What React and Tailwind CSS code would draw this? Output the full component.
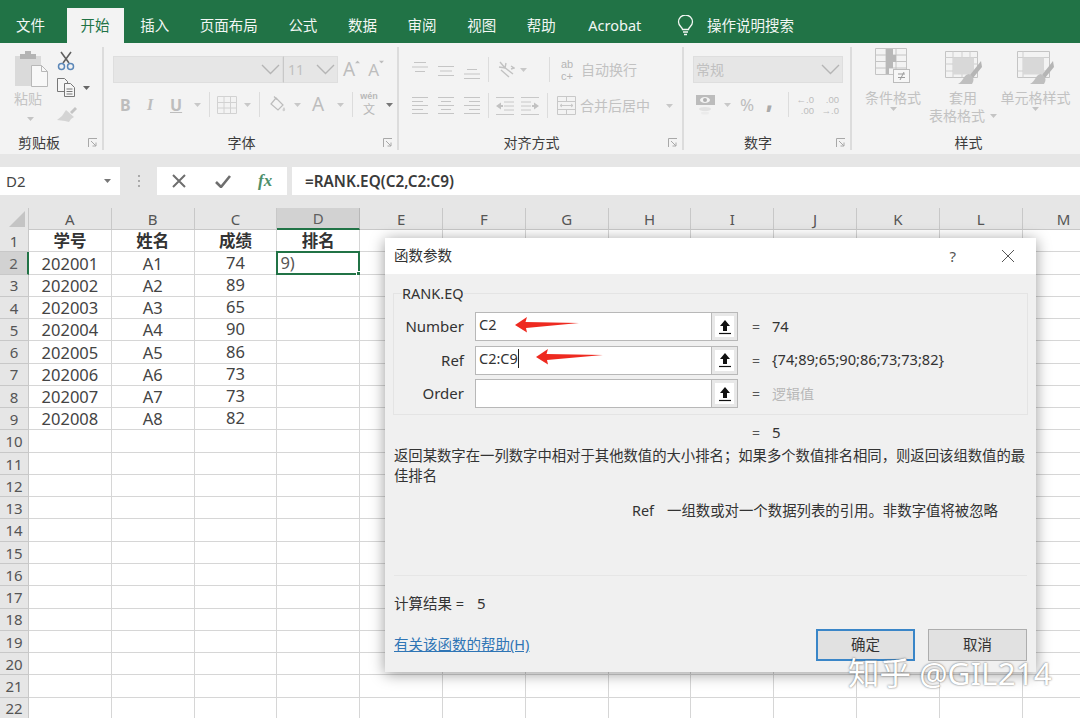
import React from "react";

const tabs = ["审阅", "视图", "帮助", "Acrobat"];
const columns = ["A", "B", "C", "D", "E", "F", "G", "H", "I", "J", "K", "L", "M"];
const students = [
  ["202001", "A1", "74"],
  ["202002", "A2", "89"],
  ["202003", "A3", "65"],
  ["202004", "A4", "90"],
  ["202005", "A5", "86"],
  ["202006", "A6", "73"],
  ["202007", "A7", "73"],
  ["202008", "A8", "82"],
];
const rowNumbers = Array.from({ length: 22 }, (_, i) => i + 1);

const Caret = ({ className = "" }) => (
  <svg width="7" height="4" viewBox="0 0 7 4" className={className}>
    <path d="M0 0h7L3.5 4z" fill="currentColor" />
  </svg>
);

const Chevron = () => (
  <svg width="19" height="11" viewBox="0 0 19 11" fill="none" stroke="#b5b5b5" strokeWidth="1.4">
    <path d="M1 1l8.5 8.5L18 1" />
  </svg>
);

const Launcher = () => (
  <svg width="10" height="10" viewBox="0 0 10 10" fill="none" stroke="#a8a8a8" strokeWidth="1">
    <path d="M.5 9V.5H9M3 3l5 5M8 4.5V8H4.5" />
  </svg>
);

const Sep = ({ className = "" }) => <div className={`w-px h-[25px] bg-[#dcdcdc] ${className}`} />;

const PasteIcon = () => (
  <svg width="34" height="36" viewBox="0 0 34 36">
    <rect x="0" y="5" width="26" height="30" fill="#dadada" />
    <rect x="5" y="3" width="16" height="5" fill="#b4b4b4" />
    <rect x="10" y="0" width="6" height="4" fill="#b4b4b4" />
    <path d="M16.5 14.5h10l6 6v15h-16z" fill="#f8f8f8" stroke="#b8b8b8" />
    <path d="M26.5 14.5v6h6" fill="none" stroke="#b8b8b8" />
  </svg>
);

const ScissorsIcon = () => (
  <svg width="18" height="20" viewBox="0 0 18 20" fill="none">
    <path d="M4 1l8 11M14 1L6 12" stroke="#5f5f5f" strokeWidth="1.6" />
    <circle cx="4.5" cy="15.5" r="3" stroke="#5b87b8" strokeWidth="1.5" />
    <circle cx="13.5" cy="15.5" r="3" stroke="#5b87b8" strokeWidth="1.5" />
  </svg>
);

const CopyIcon = () => (
  <svg width="18" height="19" viewBox="0 0 18 19" fill="#f6f6f6" stroke="#777">
    <path d="M.5.5h7l3 3v10H.5z" />
    <path d="M7.5 5.5h6l4 4v9h-10z" />
    <path d="M9.5 11h6M9.5 13.5h6M9.5 16h6" />
  </svg>
);

const BrushIcon = () => (
  <svg width="20" height="16" viewBox="0 0 20 16">
    <path d="M13 5l5-5 2 2-5 5z" fill="#c4c4c4" />
    <path d="M9 3l8 7-3 2-2 3-4-1-8-1 5-4z" fill="#d4d4d4" />
  </svg>
);

const GridIcon = () => (
  <svg width="20" height="18" viewBox="0 0 20 18" fill="none" stroke="#d2d2d2">
    <path d="M.5.5h19v17H.5zM.5 6.500h19M.5 12h19M7 .5v17M13.500.5v17" />
  </svg>
);

const FillIcon = () => (
  <svg width="17" height="17" viewBox="0 0 17 17" fill="none" stroke="#bcbcbc" strokeWidth="1.2">
    <path d="M7 2l7 7-5 5-7-6z" fill="#f3f3f3" />
    <path d="M5 .5l3 3" />
    <path d="M15 11c1 1.600 1.500 2.400 1 3.400-.5 1-2 1-2.400 0-.3-1 .4-2 1.400-3.400z" fill="#cfcfcf" stroke="none" />
  </svg>
);

const lineSet = {
  top: [[2, 14], [0, 16], [3, 13]],
  middle: [[0, 16], [2, 14], [0, 16]],
  bottom: [[3, 13], [0, 16], [0, 16]],
};

const VAlign = ({ kind, top }) => (
  <svg width="17" height="18" viewBox="0 0 17 18" stroke="#c5c5c5">
    {lineSet[kind].map(([a, b], i) => (
      <path key={i} d={`M${a} ${top + i * 4.5 + 0.5}H${b}`} />
    ))}
  </svg>
);

const HAlign = ({ kind }) => {
  const spans = {
    left: [[0, 16], [0, 11], [0, 16], [0, 11], [0, 16]],
    center: [[0, 16], [3, 13], [0, 16], [3, 13], [0, 16]],
    right: [[0, 16], [5, 16], [0, 16], [5, 16], [0, 16]],
  }[kind];
  return (
    <svg width="17" height="18" viewBox="0 0 17 18" stroke="#c5c5c5">
      {spans.map(([a, b], i) => (
        <path key={i} d={`M${a} ${i * 4 + 0.5}H${b}`} />
      ))}
    </svg>
  );
};

const OrientIcon = () => (
  <svg width="17" height="17" viewBox="0 0 17 17" fill="none" stroke="#c2c2c2" strokeWidth="1.4">
    <path d="M2 1l5 6M1 6l6 1 1-5" />
    <path d="M3 9l8 7M6 6l9 7" />
    <path d="M13 5l3 2-3 1" />
  </svg>
);

const IndentIcon = ({ flip }) => (
  <svg width="18" height="18" viewBox="0 0 18 18" className={flip ? "-scale-x-100" : ""}>
    <path d="M0 .5h18M8 5h10M8 9h10M8 13h10M0 17.500h18" stroke="#c8c8c8" fill="none" />
    <path d="M0 9l5-3.500v2.500h2v2H5v2.500z" fill="#c2c2c2" />
  </svg>
);

const MergeIcon = () => (
  <svg width="19" height="19" viewBox="0 0 19 19" fill="none" stroke="#c8c8c8">
    <path d="M.5.5h18v18H.5zM.5 5.500h18M.5 13.500h18M9.500.5v5M9.500 13.500v5" />
    <path d="M3 9.500h13M3 9.500l2-1.500M3 9.500l2 1.500M16 9.500L14 8M16 9.500L14 11" />
  </svg>
);

const CurrencyIcon = () => (
  <svg width="19" height="20" viewBox="0 0 19 20">
    <rect x="0" y="0" width="19" height="10" fill="#bcbcbc" />
    <ellipse cx="9" cy="5" rx="5" ry="3" fill="#f3f3f3" />
    <circle cx="9" cy="5" r="2" fill="#b0b0b0" />
    <ellipse cx="9" cy="14" rx="6" ry="2" fill="#e2e2e2" />
    <ellipse cx="9" cy="18" rx="4" ry="1.500" fill="#ebebeb" />
  </svg>
);

const CondIcon = () => (
  <svg width="36" height="37" viewBox="0 0 36 37" fill="none">
    <path d="M.5.5h31v26H.5zM.5 7h31M.5 13.500h31M.5 20h31M11 .5v26M21 .5v26" stroke="#c4c4c4" />
    <path d="M11 1h7v6h3v7h-3v6h-4v6h-3z" fill="#b8b8b8" />
    <rect x="18.500" y="21.500" width="16" height="13" fill="#f6f6f6" stroke="#bcbcbc" />
    <path d="M23 26h7M23 29.500h7M25 32l4-8" stroke="#9a9a9a" />
  </svg>
);

const StyleIcon = ({ table }) => (
  <svg width="37" height="34" viewBox="0 0 37 34" fill="none">
    <path d="M.5.5h32v26H.5z" stroke="#c4c4c4" />
    {table ? <path d="M.5 6.500h32M.5 13h32M.5 20h32M8 .5v26M17 .5v26M25 .5v26" stroke="#cfcfcf" /> : <path d="M.5 6.500h32M.5 20h32M6 .5v26" stroke="#cfcfcf" />}
    <rect x={table ? 8 : 6} y="6.500" width="21" height="17" fill="#d8d8d8" />
    <path d="M36 10L25 24l3 3 9-11z" fill="#b5b5b5" />
    <path d="M24 23c-6 1-5 7-11 10h14c2-3 2-6 0-8z" fill="#bfbfbf" />
  </svg>
);

const StyleGroupItem = ({ icon, label, second, width }) => (
  <div className={`flex flex-col items-center ${width}`}>
    <div className="h-[38px] flex items-end">{icon}</div>
    <div className="text-[14px] leading-[18px] mt-[4px] text-[#c2c2c2] whitespace-nowrap">{label}</div>
    <div className="text-[14px] leading-[18px] text-[#c2c2c2] whitespace-nowrap flex items-center justify-center">
      {second && <span>{second}</span>}
      <Caret className={`text-[#c4c4c4] ${second ? "ml-[5px]" : ""}`} />
    </div>
  </div>
);

const Footer = ({ label }) => (
  <div className="h-[24px] -mb-[3px] pt-[3px] flex items-center pr-[4px]">
    <div className="flex-1 text-center text-[14px] text-[#3c3c3c] pr-[4px]">{label}</div>
    <Launcher />
  </div>
);

const Ribbon = () => (
  <div className="h-[111px] bg-[#f3f3f3] flex">
    <div className="w-[104px] flex flex-col border-r-2 border-[#dcdcdc] my-[4px]">
      <div className="flex-1 flex pt-[4px]">
        <div className="w-[57px] pl-[15px] flex flex-col">
          <PasteIcon />
          <div className="text-[14px] text-[#c4c4c4] leading-[18px] mt-[3px] -ml-[1px]">粘贴</div>
          <Caret className="text-[#c4c4c4] ml-[12px] mt-[9px]" />
        </div>
        <div className="flex flex-col">
          <ScissorsIcon />
          <div className="flex items-center gap-[8px] mt-[7px]">
            <CopyIcon />
            <Caret className="text-[#666]" />
          </div>
          <div className="mt-[10px]"><BrushIcon /></div>
        </div>
      </div>
      <div className="h-[24px] -mb-[3px] pt-[3px] flex items-center pl-[18px] pr-[4px] text-[14px] text-[#3c3c3c] justify-between">
        <span>剪贴板</span>
        <Launcher />
      </div>
    </div>

    <div className="w-[295px] flex flex-col my-[4px] border-r-2 border-[#dcdcdc]">
      <div className="flex-1 pl-[9px] pt-[9px]">
        <div className="flex items-center">
          <div className="w-[170px] h-[27px] bg-[#e6e6e6] border border-[#dedede] flex items-center justify-end pr-[2px]"><Chevron /></div>
          <div className="w-[55px] h-[27px] bg-[#e6e6e6] border border-[#dedede] border-l-[#c8c8c8] flex items-center justify-between pl-[4px] pr-[2px] text-[14px] text-[#c0c0c0]">
            <span>11</span>
            <Chevron />
          </div>
          <div className="flex items-start ml-[5px] text-[#bdbdbd] leading-none">
            <span className="text-[19px]">A</span>
            <Caret className="rotate-180 -ml-[1px] scale-75" />
            <span className="text-[17px] ml-[7px] mt-[1px]">A</span>
            <Caret className="-ml-[1px] scale-75" />
          </div>
        </div>
        <div className="flex items-center h-[25px] mt-[9px] pl-[7px] text-[#bdbdbd]">
          <span className="text-[16px] font-bold w-[27px]">B</span>
          <span className="text-[16px] font-bold italic w-[23px] [font-family:'Liberation_Serif',serif]">I</span>
          <span className="text-[16px] font-bold underline w-[24px]">U</span>
          <Caret className="text-[#c8c8c8]" />
          <Sep className="ml-[8px] mr-[7px]" />
          <GridIcon />
          <Caret className="text-[#c8c8c8] ml-[7px]" />
          <Sep className="ml-[8px] mr-[9px]" />
          <FillIcon />
          <Caret className="text-[#c8c8c8] ml-[8px]" />
          <span className="text-[19px] ml-[11px] w-[15px]">A</span>
          <Caret className="text-[#c8c8c8] ml-[10px]" />
          <Sep className="ml-[8px] mr-[7px]" />
          <div className="w-[18px] flex flex-col items-center text-[#b8b8b8]">
            <span className="text-[9px] leading-[10px] font-semibold [font-family:'Liberation_Sans',sans-serif]">wén</span>
            <span className="text-[12px] leading-[17px]">文</span>
          </div>
          <Caret className="text-[#777] ml-[8px]" />
        </div>
      </div>
      <Footer label="字体" />
    </div>

    <div className="w-[285px] flex flex-col my-[4px] border-r-2 border-[#dcdcdc]">
      <div className="flex-1 pl-[13px] pt-[13px]">
        <div className="flex items-center h-[19px]">
          <VAlign kind="top" top={1} />
          <div className="ml-[9px]"><VAlign kind="middle" top={5} /></div>
          <div className="ml-[9px]"><VAlign kind="bottom" top={8} /></div>
          <Sep className="ml-[7px] mr-[9px]" />
          <OrientIcon />
          <Caret className="text-[#c8c8c8] ml-[5px]" />
          <Sep className="ml-[22px] mr-[11px]" />
          <div className="w-[16px] text-[11px] leading-[12px] text-[#b5b5b5] [font-family:'Liberation_Sans',sans-serif]">ab<br />c+</div>
          <span className="ml-[4px] text-[14px] text-[#c2c2c2]">自动换行</span>
        </div>
        <div className="flex items-center h-[25px] mt-[14px]">
          <HAlign kind="left" />
          <div className="ml-[9px]"><HAlign kind="center" /></div>
          <div className="ml-[9px]"><HAlign kind="right" /></div>
          <Sep className="ml-[7px] mr-[7px]" />
          <IndentIcon />
          <div className="ml-[7px]"><IndentIcon flip /></div>
          <Sep className="ml-[8px] mr-[9px]" />
          <MergeIcon />
          <span className="ml-[4px] text-[14px] text-[#c2c2c2] w-[86px]">合并后居中</span>
          <Caret className="text-[#c8c8c8]" />
        </div>
      </div>
      <Footer label="对齐方式" />
    </div>

    <div className="w-[168px] flex flex-col my-[4px] border-r-2 border-[#dcdcdc]">
      <div className="flex-1 pl-[9px] pt-[9px]">
        <div className="w-[150px] h-[27px] bg-[#e6e6e6] border border-[#dedede] flex items-center justify-between pl-[2px] pr-[2px] text-[14px] text-[#c0c0c0]">
          <span>常规</span>
          <Chevron />
        </div>
        <div className="flex items-center h-[25px] mt-[9px] pl-[3px] text-[#bdbdbd]">
          <CurrencyIcon />
          <Caret className="text-[#c8c8c8] ml-[9px]" />
          <span className="text-[17px] ml-[9px] w-[26px]">%</span>
          <span className="text-[22px] font-black w-[22px] leading-none -mt-[10px] text-[#aaa]">,</span>
          <Sep />
          <div className="ml-[6px] w-[19px] text-[9.5px] leading-[11px] text-right whitespace-nowrap [font-family:'Liberation_Sans',sans-serif]">←.0<br />.00</div>
          <div className="ml-[6px] w-[19px] text-[9.5px] leading-[11px] text-right whitespace-nowrap [font-family:'Liberation_Sans',sans-serif]">.00<br />→.0</div>
        </div>
      </div>
      <Footer label="数字" />
    </div>

    <div className="flex-1 flex flex-col my-[4px]">
      <div className="flex-1 flex pl-[6px]">
        <StyleGroupItem icon={<CondIcon />} label="条件格式" width="w-[70px]" />
        <StyleGroupItem icon={<StyleIcon table />} label="套用" second="表格格式" width="w-[70px]" />
        <StyleGroupItem icon={<StyleIcon />} label="单元格样式" width="w-[75px]" />
      </div>
      <div className="h-[24px] -mb-[3px] pt-[3px] flex items-center justify-center text-[14px] text-[#3c3c3c] pl-[5px]">样式</div>
    </div>
  </div>
);

const FormulaBar = () => (
  <div className="h-[54px] bg-[#e6e6e6] pt-[13px] flex items-start">
    <div className="w-[120px] h-[28px] bg-white flex items-center justify-between pl-[6px] pr-[9px] text-[15px] text-[#444]">
      <span>D2</span>
      <Caret className="text-[#777]" />
    </div>
    <div className="w-[37px] h-[28px] flex flex-col items-center justify-center gap-[3px]">
      <span className="w-[2px] h-[2px] bg-[#aaa]" />
      <span className="w-[2px] h-[2px] bg-[#aaa]" />
      <span className="w-[2px] h-[2px] bg-[#aaa]" />
    </div>
    <div className="w-[130px] h-[28px] bg-white flex items-center pl-[14px]">
      <svg width="16" height="14" viewBox="0 0 16 14" fill="none" stroke="#6e6e6e" strokeWidth="2"><path d="M2 1l12 12M14 1L2 13" /></svg>
      <svg width="16" height="13" viewBox="0 0 16 13" fill="none" stroke="#6e6e6e" strokeWidth="2.6" className="ml-[28px]"><path d="M1 7l5 5L15 1" /></svg>
      <span className="ml-[27px] text-[17px] italic font-bold text-[#4d8f6b] [font-family:'Liberation_Serif',serif]">fx</span>
    </div>
    <div className="ml-[5px] flex-1 h-[28px] bg-white flex items-center pl-[13px] text-[15.300px] font-semibold text-[#3a3a3a]">
      =RANK.EQ(C2,C2:C9)
    </div>
  </div>
);

const Sheet = () => (
  <div className="grid grid-cols-[29px_repeat(13,82.8px)] grid-rows-[22px_repeat(22,22.28px)] text-[16.500px] text-[#444] bg-white">
    <div className="bg-[#e6e6e6] border-r border-[#c8c8c8] flex items-end justify-end p-[3px]">
      <div className="w-0 h-0 border-l-[16px] border-l-transparent border-b-[16px] border-b-[#c4c4c4]" />
    </div>
    {columns.map((c) => (
      <div
        key={c}
        className={`flex items-center justify-center border-r pt-px text-[15px] ${
          c === "D"
            ? "bg-[#d2d2d2] border-[#b8b8b8] border-b-2 border-b-[#217346] text-[#5f5f5f]"
            : "bg-[#e6e6e6] border-[#c8c8c8] border-b border-b-[#c8c8c8] text-[#555]"
        }`}
      >
        {c}
      </div>
    ))}
    {rowNumbers.map((n) => {
      const student = n >= 2 && n <= 9 ? students[n - 2] : null;
      return (
        <React.Fragment key={n}>
          <div
            className={`flex items-center justify-center pt-px text-[15px] border-b border-[#c8c8c8] ${
              n === 2 ? "bg-[#d2d2d2] border-r-2 border-r-[#217346] text-[#5f5f5f]" : "bg-[#e6e6e6] border-r border-r-[#c8c8c8] text-[#555]"
            }`}
          >
            {n}
          </div>
          {columns.map((c, i) => {
            let text = "";
            if (n === 1) text = ["学号", "姓名", "成绩", "排名"][i] || "";
            else if (student && i < 3) text = student[i];
            const selected = n === 2 && c === "D";
            return (
              <div
                key={c}
                className={`relative flex items-center justify-center border-r border-b border-[#d6d6d6] whitespace-nowrap ${n === 1 ? "font-bold text-[#333]" : ""} ${i === 2 && n > 1 ? "" : "pt-[2px]"}`}
              >
                {text}
                {selected && (
                  <div className="absolute -left-px -top-px right-[-1px] bottom-[-1px] border-2 border-[#217346] pl-[2px] flex items-center text-[#555]">
                    9)
                    <span className="absolute -right-[3px] -bottom-[3px] w-[5px] h-[5px] bg-[#217346] border border-white" />
                  </div>
                )}
              </div>
            );
          })}
        </React.Fragment>
      );
    })}
  </div>
);

const RefButton = () => (
  <div className="w-[26px] bg-[#e8e8e8] border-l border-[#b8b8b8] p-[3px] flex">
    <div className="flex-1 bg-white flex items-center justify-center">
      <svg width="12" height="16" viewBox="0 0 12 16"><path d="M6 1l5 6H8v5H4V7H1z" fill="#111" /><path d="M0 14.500h12" stroke="#111" strokeWidth="1.2" /></svg>
    </div>
  </div>
);

const Arrow = ({ className, width }) => (
  <svg width={width} height="16" viewBox={`0 0 ${width} 16`} className={`absolute pointer-events-none ${className}`}>
    <path d={`M0 8L12 0 10.500 5 ${width} 6 11 11 12 15.500z`} fill="#ee2a20" />
  </svg>
);

const ArgRow = ({ label, value, valueClass = "text-[14.600px] text-[#333]", text, caret, children }) => (
  <div className="flex items-center h-[29px]">
    <div className="w-[71px] text-right text-[15px] text-[#333] pr-[1px]">{label}</div>
    <div className="relative ml-[10px] w-[263px] h-full border border-[#b8b8b8] bg-white flex">
      <div className="flex-1 pl-[3px] text-[14.500px] leading-[22px] text-[#333] flex items-start">
        <span>{text}</span>
        {caret && <span className="w-px h-[19px] mt-[2px] bg-[#222]" />}
      </div>
      <RefButton />
      {children}
    </div>
    <span className="ml-[14px] w-[20px] text-[14px] text-[#555]">=</span>
    <span className={`whitespace-nowrap ${valueClass}`}>{value}</span>
  </div>
);

const Dialog = () => (
  <div className="absolute left-[385px] top-[238px] w-[651px] h-[434px] bg-[#f0f0f0] shadow-[0_2px_14px_rgba(0,0,0,0.4)] flex flex-col text-[#333]">
    <div className="h-[36px] bg-white flex items-center pl-[9px] pr-[21px] text-[14.500px] shrink-0">
      <span className="flex-1">函数参数</span>
      <span className="text-[15px] text-[#555] mr-[45px]">?</span>
      <svg width="14" height="14" viewBox="0 0 14 14" fill="none" stroke="#555" strokeWidth="1"><path d="M1 1l12 12M13 1L1 13" /></svg>
    </div>
    <div className="relative mx-[8px] mt-[19px] h-[122px] border border-[#e4e4e4] pt-[18px] pl-[11px] shrink-0">
      <span className="absolute left-[8px] -top-[11px] bg-[#f0f0f0] text-[14.500px] leading-[20px]">RANK.EQ</span>
      <div className="flex flex-col gap-[4.500px] -ml-[11px]">
        <ArgRow label="Number" text="C2" value="74">
          <Arrow width={64} className="left-[39px] top-[4px]" />
        </ArgRow>
        <ArgRow label="Ref" text="C2:C9" caret value="{74;89;65;90;86;73;73;82}">
          <Arrow width={67} className="left-[60px] top-[2px]" />
        </ArgRow>
        <ArgRow label="Order" value="逻辑值" valueClass="text-[#b8b8b8] text-[14px]" />
      </div>
    </div>
    <div className="pl-[367px] mt-[6px] text-[15px] leading-[22px] h-[22px] shrink-0">
      <span className="text-[14px] text-[#555] inline-block w-[20px]">=</span>
      <span>5</span>
    </div>
    <div className="pl-[9px] pr-[5px] mt-[3px] text-[14.350px] leading-[20px]">
      返回某数字在一列数字中相对于其他数值的大小排名；如果多个数值排名相同，则返回该组数值的最佳排名
    </div>
    <div className="flex mt-[15px] pl-[247px] text-[14.400px] leading-[20px]">
      <span className="w-[35px]">Ref</span>
      <span>一组数或对一个数据列表的引用。非数字值将被忽略</span>
    </div>
    <div className="mx-[9px] mt-[54px] border-t border-[#e6e6e6]" />
    <div className="pl-[9px] mt-[17px] text-[14.500px] leading-[20px]">
      计算结果 =<span className="ml-[13px] text-[15px]">5</span>
    </div>
    <div className="flex items-center mt-[16px] pl-[9px] pr-[9px]">
      <a className="flex-1 text-[14.500px] text-[#2f75b5] underline">有关该函数的帮助(H)</a>
      <button className="w-[99px] h-[32px] bg-[#e1e1e1] border-2 border-[#3a86c8] text-[14.500px]">确定</button>
      <button className="ml-[13px] w-[99px] h-[32px] bg-[#e1e1e1] border border-[#adadad] text-[14.500px]">取消</button>
    </div>
  </div>
);

export default function App() {
  return (
    <div className="relative w-[1080px] h-[718px] overflow-hidden bg-white [font-family:'Noto_Sans','Noto_Sans_CJK_SC',sans-serif]">
      <div className="h-[43px] bg-[#217346] flex items-end pl-[2px] gap-[2.600px] text-[14.500px] text-[#f2f7f4]">
        <div className="h-[35px] px-[14px] flex items-center mr-[5px]">文件</div>
        <div className="h-[35px] px-[14px] flex items-center bg-[#f3f3f3] text-[#217346]">开始</div>
        <div className="h-[35px] px-[14px] flex items-center">插入</div>
        <div className="h-[35px] px-[14px] flex items-center">页面布局</div>
        <div className="h-[35px] px-[14px] flex items-center">公式</div>
        <div className="h-[35px] px-[14px] flex items-center">数据</div>
        {tabs.map((t) => (
          <div key={t} className={`h-[35px] px-[14px] flex items-center ${t === "Acrobat" ? "ml-[2px]" : ""}`}>{t}</div>
        ))}
        <div className="h-[35px] flex items-center ml-[19px]">
          <svg width="17" height="21" viewBox="0 0 17 21" fill="none" stroke="#f2f7f4" strokeWidth="1.3">
            <path d="M5.500 14.500c0-2-4-3.500-4-7.500a7 7 0 0 1 14 0c0 4-4 5.500-4 7.500z" />
            <path d="M6 17h5M7 19.500h3" />
          </svg>
          <span className="ml-[13px]">操作说明搜索</span>
        </div>
      </div>
      <Ribbon />
      <FormulaBar />
      <Sheet />
      <Dialog />
      <div className="absolute left-[848px] top-[653px] text-[31.500px] leading-[40px] text-white [text-shadow:0_0_2px_rgba(70,70,70,0.9)] whitespace-nowrap">
        知乎 @GIL214
      </div>
    </div>
  );
}
